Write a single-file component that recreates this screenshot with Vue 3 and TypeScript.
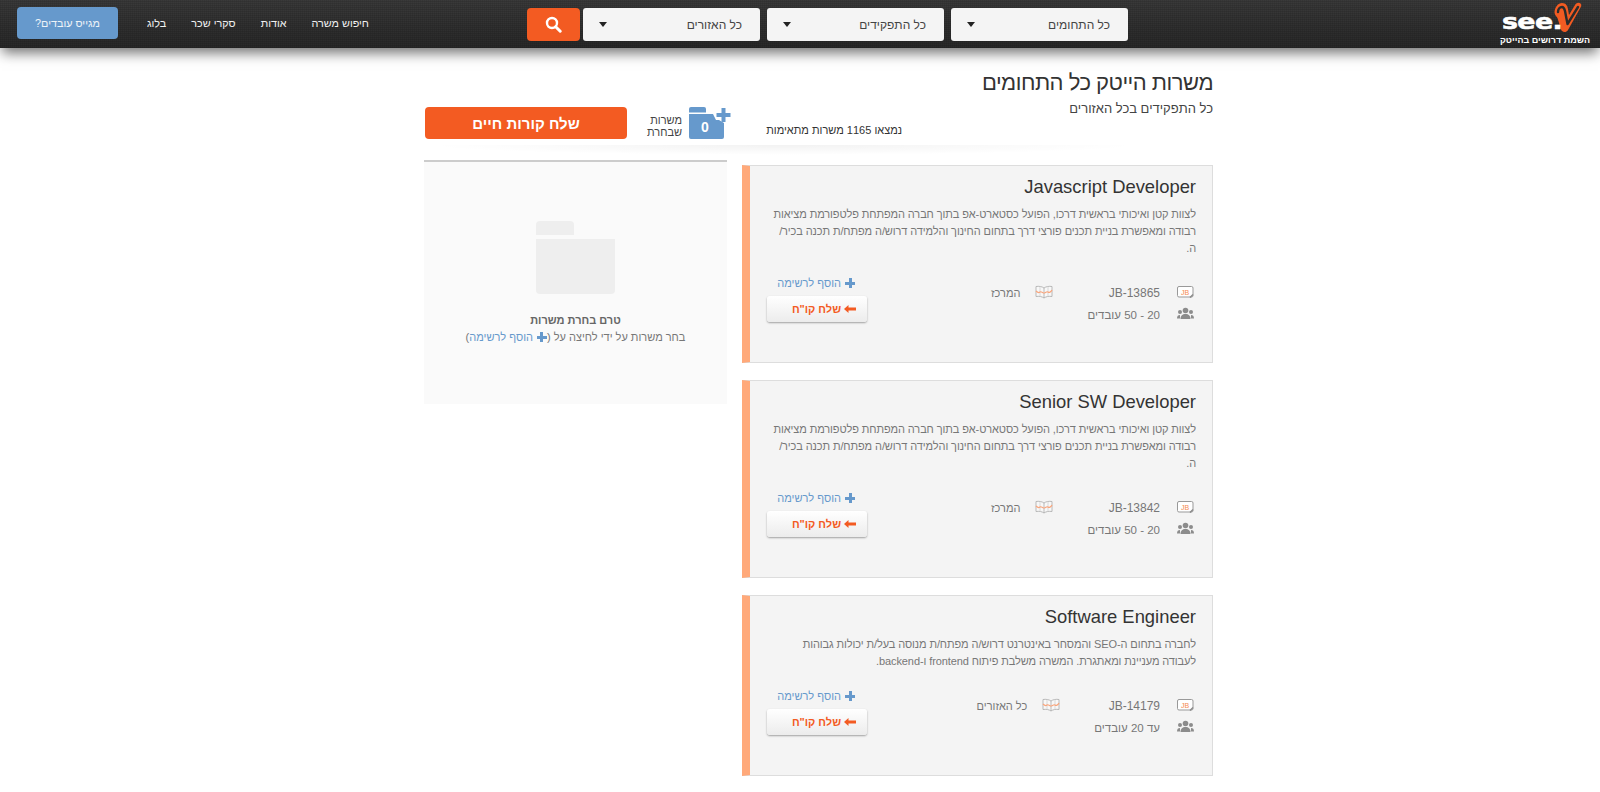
<template>
  <div class="page" dir="rtl">
    <header class="topbar">
      <a class="logo">
        <span class="logo-mark" dir="ltr">
          <span class="logo-see">see.</span>
          <svg class="logo-v" width="31" height="33" viewBox="0 0 31 33">
            <path d="M2.500 12C3 7 6 3 10 3c4 0 5.500 3 6 6l1 6 6-10c1.500-2.500 4-3 5.500-1.500 1 1 1 2.500 0 4L16 30c-1 1.500-2 2-3.500 2S9.500 31 9 29.500L5.500 18C4 16 2.500 14.500 2.500 12z" fill="#f35b22" />
            <path d="M6 12c0-3 2-5 4-5s2.500 2 3 4l2.500 13L26 7" fill="none" stroke="#2c2c2c" stroke-width="2.400" stroke-linecap="round" stroke-linejoin="round" />
          </svg>
        </span>
        <span class="logo-sub">השמת דרושים בהייטק</span>
      </a>

      <div class="filters">
        <div v-for="f in filters" :key="f" class="select">
          <span>{{ f }}</span>
          <i class="caret"></i>
        </div>
        <button class="search-btn" type="button" aria-label="חיפוש">
          <svg width="17" height="17" viewBox="0 0 17 17">
            <circle cx="7" cy="7" r="5" fill="none" stroke="#fff" stroke-width="2.400" />
            <path d="M10.700 10.700L15.200 15.200" stroke="#fff" stroke-width="3" stroke-linecap="round" />
          </svg>
        </button>
      </div>

      <nav class="nav">
        <a v-for="n in navItems" :key="n">{{ n }}</a>
        <button class="employer-btn" type="button">מגייס עובדים?</button>
      </nav>
    </header>

    <main class="content">
      <section class="head">
        <div class="titles">
          <h1>משרות הייטק כל התחומים</h1>
          <p>כל התפקידים בכל האזורים</p>
        </div>
        <div class="found">נמצאו 1165 משרות מתאימות</div>
        <div class="actions">
          <svg class="folder" width="42" height="32" viewBox="0 0 42 32">
            <path d="M0 2a2 2 0 0 1 2-2h13a2 2 0 0 1 2 2v3.500H0z" fill="#6699cc" />
            <path d="M0 7h24l3 6h3l5 3v14a2 2 0 0 1-2 2H2a2 2 0 0 1-2-2z" fill="#6699cc" />
            <path d="M34.500 1v14M27.500 8h14" stroke="#6699cc" stroke-width="4" />
            <text x="16" y="25" text-anchor="middle" class="folder-count">0</text>
          </svg>
          <div class="selected-label">משרות<br />שבחרת</div>
          <button class="send-btn" type="button">שלח קורות חיים</button>
        </div>
      </section>
      <div class="divider"></div>

      <div class="columns">
        <div class="jobs">
          <article v-for="job in jobs" :key="job.code" class="job">
            <h2 dir="auto">{{ job.title }}</h2>
            <p class="desc">{{ job.desc }}</p>
            <div class="job-foot">
              <div class="meta">
                <div class="meta-cell">
                  <svg class="ico" width="17" height="14" viewBox="0 0 17 14">
                    <rect x="0.500" y="1.500" width="15.500" height="10.500" rx="1.500" fill="#fff" stroke="#999" />
                    <text x="8" y="9.500" text-anchor="middle" class="jb-mark">JB</text>
                    <path d="M13 12.500l3-3" stroke="#888" stroke-width="1.500" />
                  </svg>
                  <span>{{ job.code }}</span>
                </div>
                <div class="meta-cell area">
                  <svg class="ico" width="18" height="14" viewBox="0 0 18 14">
                    <path d="M9 3C7 1.500 4 1 1 1.500v10C4 11 7 11.500 9 13c2-1.500 5-2 8-1.500v-10C14 1 11 1.500 9 3zM9 3v10" fill="#f8f8f8" stroke="#aaa" stroke-width="0.800" />
                    <path d="M5 1.500v10M13 1.500v10" stroke="#ccc" stroke-width="0.700" />
                    <path d="M1 6c2 2 3 2 4 1s3 1 4 1 3-2 4-1 3 0 4-2" fill="none" stroke="#f9a57c" stroke-width="1.200" />
                  </svg>
                  <span>{{ job.area }}</span>
                </div>
                <div class="meta-cell size">
                  <svg class="ico" width="17" height="13" viewBox="0 0 17 13">
                    <circle cx="8.500" cy="3.500" r="2.800" fill="#8c8c8c" />
                    <path d="M3.500 12c0-3.500 2-5 5-5s5 1.500 5 5z" fill="#8c8c8c" />
                    <circle cx="3" cy="5" r="2" fill="#8c8c8c" />
                    <circle cx="14" cy="5" r="2" fill="#8c8c8c" />
                    <path d="M0 11.500c0-2.500 1-3.500 3-3.500v3.500zM17 11.500c0-2.500-1-3.500-3-3.500v3.500z" fill="#8c8c8c" />
                  </svg>
                  <span>{{ job.size }}</span>
                </div>
              </div>
              <div class="job-actions">
                <a class="add-link"><i class="plus"></i>הוסף לרשימה</a>
                <button class="cv-btn" type="button">
                  <svg width="12" height="8" viewBox="0 0 12 8">
                    <path d="M0 4l4.500-4v2.500H12v3H4.500V8z" fill="#f35b22" />
                  </svg>
                  שלח קו"ח
                </button>
              </div>
            </div>
          </article>
        </div>

        <aside class="basket">
          <div class="basket-folder">
            <div class="basket-tab"></div>
            <div class="basket-body"></div>
          </div>
          <strong>טרם בחרת משרות</strong>
          <p>בחר משרות על ידי לחיצה על (<a class="add-inline"><i class="plus"></i>הוסף לרשימה</a>)</p>
        </aside>
      </div>
    </main>
  </div>
</template>

<script setup lang="ts">
interface Job {
  title: string;
  desc: string;
  code: string;
  area: string;
  size: string;
}

const filters: string[] = ['כל התחומים', 'כל התפקידים', 'כל האזורים'];
const navItems: string[] = ['חיפוש משרה', 'אודות', 'סקרי שכר', 'בלוג'];

const arDesc =
  'לצוות קטן ואיכותי בראשית דרכו, הפועל כסטארט-אפ בתוך חברה המפתחת פלטפורמת מציאות רבודה ומאפשרת בניית תכנים פורצי דרך בתחום החינוך והלמידה דרוש/ה מפתח/ת תכנה בכיר/\nה.';

const jobs: Job[] = [
  { title: 'Javascript Developer', desc: arDesc, code: 'JB-13865', area: 'המרכז', size: '20 - 50 עובדים' },
  { title: 'Senior SW Developer', desc: arDesc, code: 'JB-13842', area: 'המרכז', size: '20 - 50 עובדים' },
  {
    title: 'Software Engineer',
    desc: 'לחברה בתחום ה-SEO והמסחר באינטרנט דרוש/ה מפתח/ת מנוסה בעל/ת יכולות גבוהות לעבודה מעניינת ומאתגרת. המשרה משלבת פיתוח frontend ו-backend.',
    code: 'JB-14179',
    area: 'כל האזורים',
    size: 'עד 20 עובדים',
  },
];
</script>

<style>
html,
body {
  margin: 0;
  background: #fff;
}
</style>

<style scoped>
.page {
  font-family: "Liberation Sans", Arial, sans-serif;
  color: #333;
  overflow: hidden;
}

/* top bar */
.topbar {
  height: 48px;
  box-sizing: border-box;
  display: flex;
  align-items: flex-start;
  padding: 0 14px 0 17px;
  background:
    repeating-linear-gradient(0deg, rgba(0, 0, 0, 0.1) 0 1px, transparent 1px 2px),
    repeating-linear-gradient(90deg, rgba(0, 0, 0, 0.08) 0 1px, transparent 1px 2px),
    linear-gradient(#3a3a3a, #282828);
  box-shadow: 0 7px 12px -2px rgba(0, 0, 0, 0.55);
}

.logo {
  width: 88px;
  display: flex;
  flex-direction: column;
  align-items: center;
  margin-left: 370px;
}

.logo-mark {
  display: flex;
  align-items: flex-start;
  height: 33px;
}

.logo-see {
  display: block;
  width: 50px;
  margin-top: 11px;
  font-family: "DejaVu Sans", sans-serif;
  font-weight: 700;
  font-size: 22px;
  line-height: 22px;
  letter-spacing: -0.5px;
  color: #fff;
  -webkit-text-stroke: 0.6px #fff;
  transform: scaleX(1.22);
  transform-origin: left center;
}

.logo-sub {
  font-size: 9px;
  font-weight: 700;
  color: #fff;
  white-space: nowrap;
  line-height: 12px;
  margin: 1px -6px 0 0;
}

.filters {
  display: flex;
  padding-top: 8px;
}

.select {
  width: 177px;
  height: 33px;
  box-sizing: border-box;
  margin-left: 7px;
  padding: 0 18px 0 16px;
  display: flex;
  align-items: center;
  justify-content: space-between;
  background: #f4f4f4;
  border-radius: 3px;
  font-size: 12px;
  color: #444;
}

.select:nth-child(3) {
  margin-left: 3px;
}

.caret {
  width: 0;
  height: 0;
  border-left: 4.500px solid transparent;
  border-right: 4.500px solid transparent;
  border-top: 5px solid #222;
}

.search-btn {
  width: 53px;
  height: 33px;
  padding: 0;
  border: 0;
  border-radius: 4px;
  background: #f35b22;
  display: flex;
  align-items: center;
  justify-content: center;
}

.nav {
  margin-right: auto;
  display: flex;
  align-items: center;
  height: 46px;
  gap: 25px;
  font-size: 10.800px;
  color: #f1f1f1;
}

.employer-btn {
  width: 101px;
  height: 32px;
  margin-right: 4px;
  border: 0;
  border-radius: 4px;
  background: #6699cc;
  color: #eef3f8;
  font: inherit;
}

/* page content */
.content {
  width: 789px;
  margin-right: 387px;
}

.head {
  display: flex;
  align-items: flex-end;
  height: 91px;
}

.titles {
  width: 311px;
  padding-bottom: 20px;
  flex: none;
}

.titles h1 {
  margin: 0;
  font-size: 22px;
  line-height: 28px;
  font-weight: 400;
  letter-spacing: -0.5px;
  color: #333;
  white-space: nowrap;
}

.titles p {
  margin: 2px 0 0;
  font-size: 13px;
  line-height: 20px;
  color: #444;
}

.found {
  font-size: 11px;
  line-height: 17px;
  color: #333;
  white-space: nowrap;
}

.actions {
  margin-right: auto;
  padding-left: 1px;
  display: flex;
  align-items: flex-end;
}

.folder {
  display: block;
  margin-left: 7px;
}

.folder-count {
  font: 700 14px "Liberation Sans", sans-serif;
  fill: #fff;
}

.selected-label {
  font-size: 11px;
  line-height: 12px;
  color: #444;
  margin-left: 20px;
  padding-bottom: 1px;
}

.send-btn {
  width: 202px;
  height: 32px;
  border: 0;
  border-radius: 4px;
  background: #f35b22;
  color: #fff;
  font: 700 15px "Liberation Sans", sans-serif;
}

.divider {
  height: 10px;
  margin: 6px 70px 5px 0;
  background: radial-gradient(ellipse at 50% 0, rgba(0, 0, 0, 0.05), transparent 70%);
}

.columns {
  display: flex;
  align-items: flex-start;
  gap: 15px;
}

.jobs {
  flex: none;
  width: 471px;
  padding-top: 5px;
  padding-bottom: 15px;
  display: flex;
  flex-direction: column;
  gap: 17px;
}

.job {
  box-sizing: border-box;
  padding: 10px 16px 36px 17px;
  background: #f4f4f4;
  border: 1px solid #ddd;
  border-left: 8px solid #ffa97a;
}

.job h2 {
  margin: 0;
  font-size: 18.400px;
  line-height: 22px;
  font-weight: 400;
  color: #333;
  text-align: right;
}

.desc {
  margin: 8px 0 0;
  font-size: 11px;
  letter-spacing: -0.1px;
  line-height: 17px;
  color: #777;
  white-space: pre-line;
}

.job-foot {
  display: flex;
  justify-content: space-between;
  align-items: flex-start;
  margin-top: 16px;
}

.meta {
  display: grid;
  grid-template-columns: auto auto;
  column-gap: 34px;
  justify-content: start;
  margin: 9px 2px 0 0;
  font-size: 12px;
  line-height: 22px;
  color: #777;
}

.meta-cell {
  display: flex;
  align-items: center;
}

.meta-cell.area {
  font-size: 11px;
}

.meta-cell.area .ico {
  margin-left: 15px;
}

.meta-cell.size {
  font-size: 11.500px;
}

.ico {
  flex: none;
  margin: 0 0 3px 17px;
}

.jb-mark {
  font: 400 7px "Liberation Sans", sans-serif;
  fill: #f58a50;
}

.job-actions {
  flex: none;
  width: 100px;
}

.add-link {
  display: flex;
  align-items: center;
  height: 20px;
  padding-right: 12px;
  font-size: 11px;
  color: #6699cc;
}

.plus {
  display: inline-block;
  flex: none;
  width: 10px;
  height: 10px;
  margin-left: 4px;
  vertical-align: -1px;
  background:
    linear-gradient(#6699cc, #6699cc) center / 100% 3px no-repeat,
    linear-gradient(#6699cc, #6699cc) center / 3px 100% no-repeat;
}

.cv-btn {
  width: 100px;
  height: 26px;
  margin-top: 3px;
  padding: 0 11px 0 0;
  display: flex;
  align-items: center;
  gap: 3px;
  border: 0;
  border-radius: 3px;
  background: linear-gradient(#fff, #ececec);
  box-shadow: 0 1px 2px rgba(0, 0, 0, 0.35);
  color: #f35b22;
  font: 700 11px "Liberation Sans", sans-serif;
}

/* selected jobs panel */
.basket {
  flex: none;
  width: 303px;
  height: 244px;
  box-sizing: border-box;
  border-top: 2px solid #ccc;
  background: #fafafa;
  display: flex;
  flex-direction: column;
  align-items: center;
  padding-top: 59px;
  font-size: 11px;
  color: #777;
}

.basket-folder {
  width: 79px;
  margin-bottom: 18px;
}

.basket-tab {
  width: 38px;
  height: 14px;
  margin-right: auto;
  border-radius: 4px 4px 0 0;
  background: #eee;
}

.basket-body {
  height: 55px;
  margin-top: 4px;
  border-radius: 0 0 4px 4px;
  background: #eee;
}

.basket strong {
  line-height: 17px;
  color: #666;
}

.basket p {
  margin: 0;
  line-height: 17px;
}

.add-inline {
  color: #6699cc;
}
</style>
